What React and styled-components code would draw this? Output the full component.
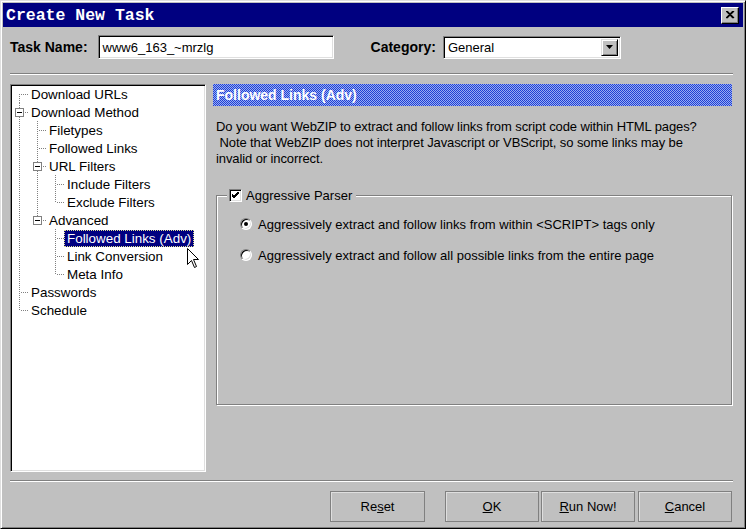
import React from 'react';
import styled, { createGlobalStyle } from 'styled-components';

const GlobalStyle = createGlobalStyle`
  html, body { margin: 0; padding: 0; background: #c0c0c0; }
  body {
    font-family: "Liberation Sans", Arial, sans-serif;
    font-size: 13px;
    color: #000;
  }
`;

const Window = styled.div`
  position: relative;
  box-sizing: border-box;
  width: 746px;
  height: 529px;
  padding: 2px;
  background: #c0c0c0;
  border: 1px solid;
  border-color: #dfdfdf #000 #000 #dfdfdf;
  box-shadow: inset 1px 1px 0 #fff, inset -1px -1px 0 #808080;
  display: flex;
  flex-direction: column;
  overflow: hidden;
`;

const TitleBar = styled.div`
  height: 24px;
  flex: none;
  background: #000080;
  display: flex;
  align-items: center;
  justify-content: space-between;
  padding: 0 4px 0 3px;
`;

const Title = styled.span`
  font-family: "Liberation Mono", "Courier New", monospace;
  font-weight: bold;
  font-size: 16.5px;
  color: #fff;
`;

const CloseButton = styled.div`
  box-sizing: border-box;
  width: 18px;
  height: 17px;
  background: #c0c0c0;
  border: 1px solid;
  border-color: #fff #000 #000 #fff;
  box-shadow: inset -1px -1px 0 #808080;
  display: flex;
  align-items: center;
  justify-content: center;
`;

const TopRow = styled.div`
  height: 24px;
  margin: 8px 7px 0;
  display: flex;
  align-items: center;
`;

const FieldLabel = styled.span`
  font-weight: bold;
  font-size: 14px;
  margin-left: ${p => p.$ml || 0}px;
  margin-right: ${p => p.$mr || 7}px;
`;

const Sunken = styled.div`
  box-sizing: border-box;
  background: #fff;
  border: 1px solid;
  border-color: #808080 #fff #fff #808080;
  box-shadow: inset 1px 1px 0 #000, inset -1px -1px 0 #dfdfdf;
`;

const TextField = styled(Sunken)`
  width: ${p => p.$w}px;
  height: 24px;
  padding-left: 4px;
  display: flex;
  align-items: center;
`;

const Combo = styled(Sunken)`
  width: 178px;
  height: 23px;
  padding: 2px 2px 2px 4px;
  display: flex;
  align-items: center;
  justify-content: space-between;
`;

const ComboArrow = styled.div`
  box-sizing: border-box;
  width: 17px;
  height: 17px;
  background: #c0c0c0;
  border: 1px solid;
  border-color: #dfdfdf #000 #000 #dfdfdf;
  box-shadow: inset 1px 1px 0 #fff, inset -1px -1px 0 #808080;
  display: flex;
  align-items: center;
  justify-content: center;
`;

const Separator = styled.div`
  flex: none;
  height: 0;
  margin: ${p => p.$mt}px 10px 0 7px;
  border-top: 1px solid #808080;
  border-bottom: 1px solid #fff;
`;

const Main = styled.div`
  flex: none;
  height: 388px;
  margin: 9px 11px 0 7px;
  display: flex;
  gap: 7px;
`;

const Tree = styled(Sunken)`
  width: 196px;
  flex: none;
  font-size: 13.4px;
`;

const TreeRow = styled.div`
  height: 18px;
  display: flex;
  align-items: center;
`;

const Cell = styled.span`
  position: relative;
  flex: none;
  width: 18px;
  height: 18px;
  &::before {
    content: '';
    display: ${p => (p.$v === 'none' ? 'none' : 'block')};
    position: absolute;
    left: 8px;
    width: 1px;
    top: ${p => (p.$v === 'bottom' ? '9px' : '0')};
    bottom: ${p => (p.$v === 'top' ? '8px' : '0')};
    background: repeating-linear-gradient(to bottom, #808080 0 1px, transparent 1px 2px);
  }
  &::after {
    content: '';
    display: ${p => (p.$h ? 'block' : 'none')};
    position: absolute;
    left: 9px;
    right: 0;
    top: 9px;
    height: 1px;
    background: repeating-linear-gradient(to right, transparent 0 1px, #808080 1px 2px);
  }
`;

const Expander = styled.span`
  position: absolute;
  z-index: 1;
  left: 4px;
  top: 5px;
  width: 9px;
  height: 9px;
  box-sizing: border-box;
  border: 1px solid #808080;
  background: #fff;
  &::after {
    content: '';
    position: absolute;
    left: 1px;
    right: 1px;
    top: 3px;
    height: 1px;
    background: #000;
  }
`;

const NodeLabel = styled.span`
  margin-left: -1px;
  padding: 0 2px;
  line-height: 15px;
  white-space: nowrap;
  border: 1px dotted ${p => (p.$sel ? '#e0e090' : 'transparent')};
  background: ${p => (p.$sel ? '#000080' : 'transparent')};
  color: ${p => (p.$sel ? '#fff' : '#000')};
`;

const Panel = styled.div`
  flex: 1;
  display: flex;
  flex-direction: column;
`;

const Header = styled.div`
  height: 22px;
  padding-left: 3px;
  display: flex;
  align-items: center;
  color: #fff;
  font-weight: bold;
  font-size: 14px;
  background-color: #4a66e0;
  background-image: repeating-conic-gradient(#1f40d4 0 25%, #98acf2 0 50%);
  background-size: 2px 2px;
`;

const Description = styled.p`
  margin: 13px 0 0 3px;
  line-height: 16px;
  letter-spacing: -0.1px;
  white-space: pre;
`;

const GroupBox = styled.div`
  position: relative;
  box-sizing: border-box;
  height: 210px;
  margin: 28px 0 0 3px;
  padding: 20px 0 0 23px;
  border: 1px solid #808080;
  box-shadow: inset 1px 1px 0 #fff, 1px 1px 0 #fff;
  display: flex;
  flex-direction: column;
  gap: 15px;
`;

const Legend = styled.div`
  position: absolute;
  top: -9px;
  left: 10px;
  height: 16px;
  padding: 0 4px 0 2px;
  background: #c0c0c0;
  display: flex;
  align-items: center;
  gap: 4px;
`;

const CheckBox = styled(Sunken)`
  width: 13px;
  height: 13px;
  display: flex;
  align-items: center;
  justify-content: center;
`;

const RadioRow = styled.div`
  height: 16px;
  display: flex;
  align-items: center;
  gap: 6px;
`;

const Radio = styled.span`
  position: relative;
  box-sizing: border-box;
  width: 12px;
  height: 12px;
  border-radius: 50%;
  background: #fff;
  border: 1px solid;
  border-color: #808080 #fff #fff #808080;
  box-shadow: inset 1px 1px 0 #000, inset -1px -1px 0 #dfdfdf;
  &::after {
    content: '';
    display: ${p => (p.$on ? 'block' : 'none')};
    position: absolute;
    left: 3px;
    top: 3px;
    width: 4px;
    height: 4px;
    border-radius: 50%;
    background: #000;
  }
`;

const ButtonRow = styled.div`
  margin-top: 9px;
  padding-right: 11px;
  display: flex;
  justify-content: flex-end;
`;

const Button = styled.div`
  box-sizing: border-box;
  width: ${p => p.$w}px;
  height: 31px;
  margin-left: ${p => p.$ml}px;
  border: 1px solid #808080;
  box-shadow: inset 1px 1px 0 #dfdfdf;
  display: flex;
  align-items: center;
  justify-content: center;
  u { text-decoration: underline; }
`;

const Cursor = styled.svg`
  position: absolute;
  left: 186px;
  top: 247px;
`;

const nodes = [
  { t: 'Download URLs', a: [], pos: 'bottom' },
  { t: 'Download Method', a: [], pos: 'full', exp: true },
  { t: 'Filetypes', a: [1], pos: 'full' },
  { t: 'Followed Links', a: [1], pos: 'full' },
  { t: 'URL Filters', a: [1], pos: 'full', exp: true },
  { t: 'Include Filters', a: [1, 1], pos: 'full' },
  { t: 'Exclude Filters', a: [1, 1], pos: 'top' },
  { t: 'Advanced', a: [1], pos: 'top', exp: true },
  { t: 'Followed Links (Adv)', a: [1, 0], pos: 'full', sel: true },
  { t: 'Link Conversion', a: [1, 0], pos: 'full' },
  { t: 'Meta Info', a: [1, 0], pos: 'top' },
  { t: 'Passwords', a: [], pos: 'full' },
  { t: 'Schedule', a: [], pos: 'top' },
];

export default function App() {
  return (
    <>
      <GlobalStyle />
      <Window>
        <TitleBar>
          <Title>Create New Task</Title>
          <CloseButton>
            <svg width="9" height="8" viewBox="0 0 9 8">
              <path d="M1 0 L8 7 M0 0 L7 7 M8 0 L1 7 M7 0 L0 7" stroke="#000" strokeWidth="1.2" />
            </svg>
          </CloseButton>
        </TitleBar>

        <TopRow>
          <FieldLabel $mr={10}>Task Name:</FieldLabel>
          <TextField $w={236}>www6_163_~mrzlg</TextField>
          <FieldLabel $ml={37}>Category:</FieldLabel>
          <Combo>
            <span>General</span>
            <ComboArrow>
              <svg width="7" height="4" viewBox="0 0 7 4">
                <path d="M0 0 H7 L3.5 4 Z" fill="#000" />
              </svg>
            </ComboArrow>
          </Combo>
        </TopRow>

        <Separator $mt={14} />

        <Main>
          <Tree>
            {nodes.map(n => (
              <TreeRow key={n.t}>
                {n.a.map((c, i) => (
                  <Cell key={i} $v={c ? 'full' : 'none'} />
                ))}
                <Cell $v={n.pos} $h>
                  {n.exp && <Expander />}
                </Cell>
                <NodeLabel $sel={n.sel}>{n.t}</NodeLabel>
              </TreeRow>
            ))}
          </Tree>

          <Panel>
            <Header>Followed Links (Adv)</Header>
            <Description>
              {'Do you want WebZIP to extract and follow links from script code within HTML pages?\n'}
              {' Note that WebZIP does not interpret Javascript or VBScript, so some links may be\n'}
              {'invalid or incorrect.'}
            </Description>
            <GroupBox>
              <Legend>
                <CheckBox>
                  <svg width="7" height="7" viewBox="0 0 7 7">
                    <path d="M0 3 L2 5 L7 0 M0 4 L2 6 L7 1 M0 2 L2 4 L7 -1" stroke="#000" strokeWidth="1" fill="none" />
                  </svg>
                </CheckBox>
                <span>Aggressive Parser</span>
              </Legend>
              <RadioRow>
                <Radio $on />
                <span>Aggressively extract and follow links from within &lt;SCRIPT&gt; tags only</span>
              </RadioRow>
              <RadioRow>
                <Radio />
                <span>Aggressively extract and follow all possible links from the entire page</span>
              </RadioRow>
            </GroupBox>
          </Panel>
        </Main>

        <Separator $mt={8} />

        <ButtonRow>
          <Button $w={95} $ml={0}>Re<u>s</u>et</Button>
          <Button $w={94} $ml={20}><u>O</u>K</Button>
          <Button $w={94} $ml={2}><u>R</u>un Now!</Button>
          <Button $w={94} $ml={3}><u>C</u>ancel</Button>
        </ButtonRow>

        <Cursor width="13" height="21" viewBox="0 0 13 21">
          <path d="M0.5 0.5 L0.5 16.5 L4.5 12.5 L7.5 19.5 L9.5 18.5 L6.5 11.5 L11.5 11.5 Z" fill="#fff" stroke="#000" strokeWidth="1" />
        </Cursor>
      </Window>
    </>
  );
}
